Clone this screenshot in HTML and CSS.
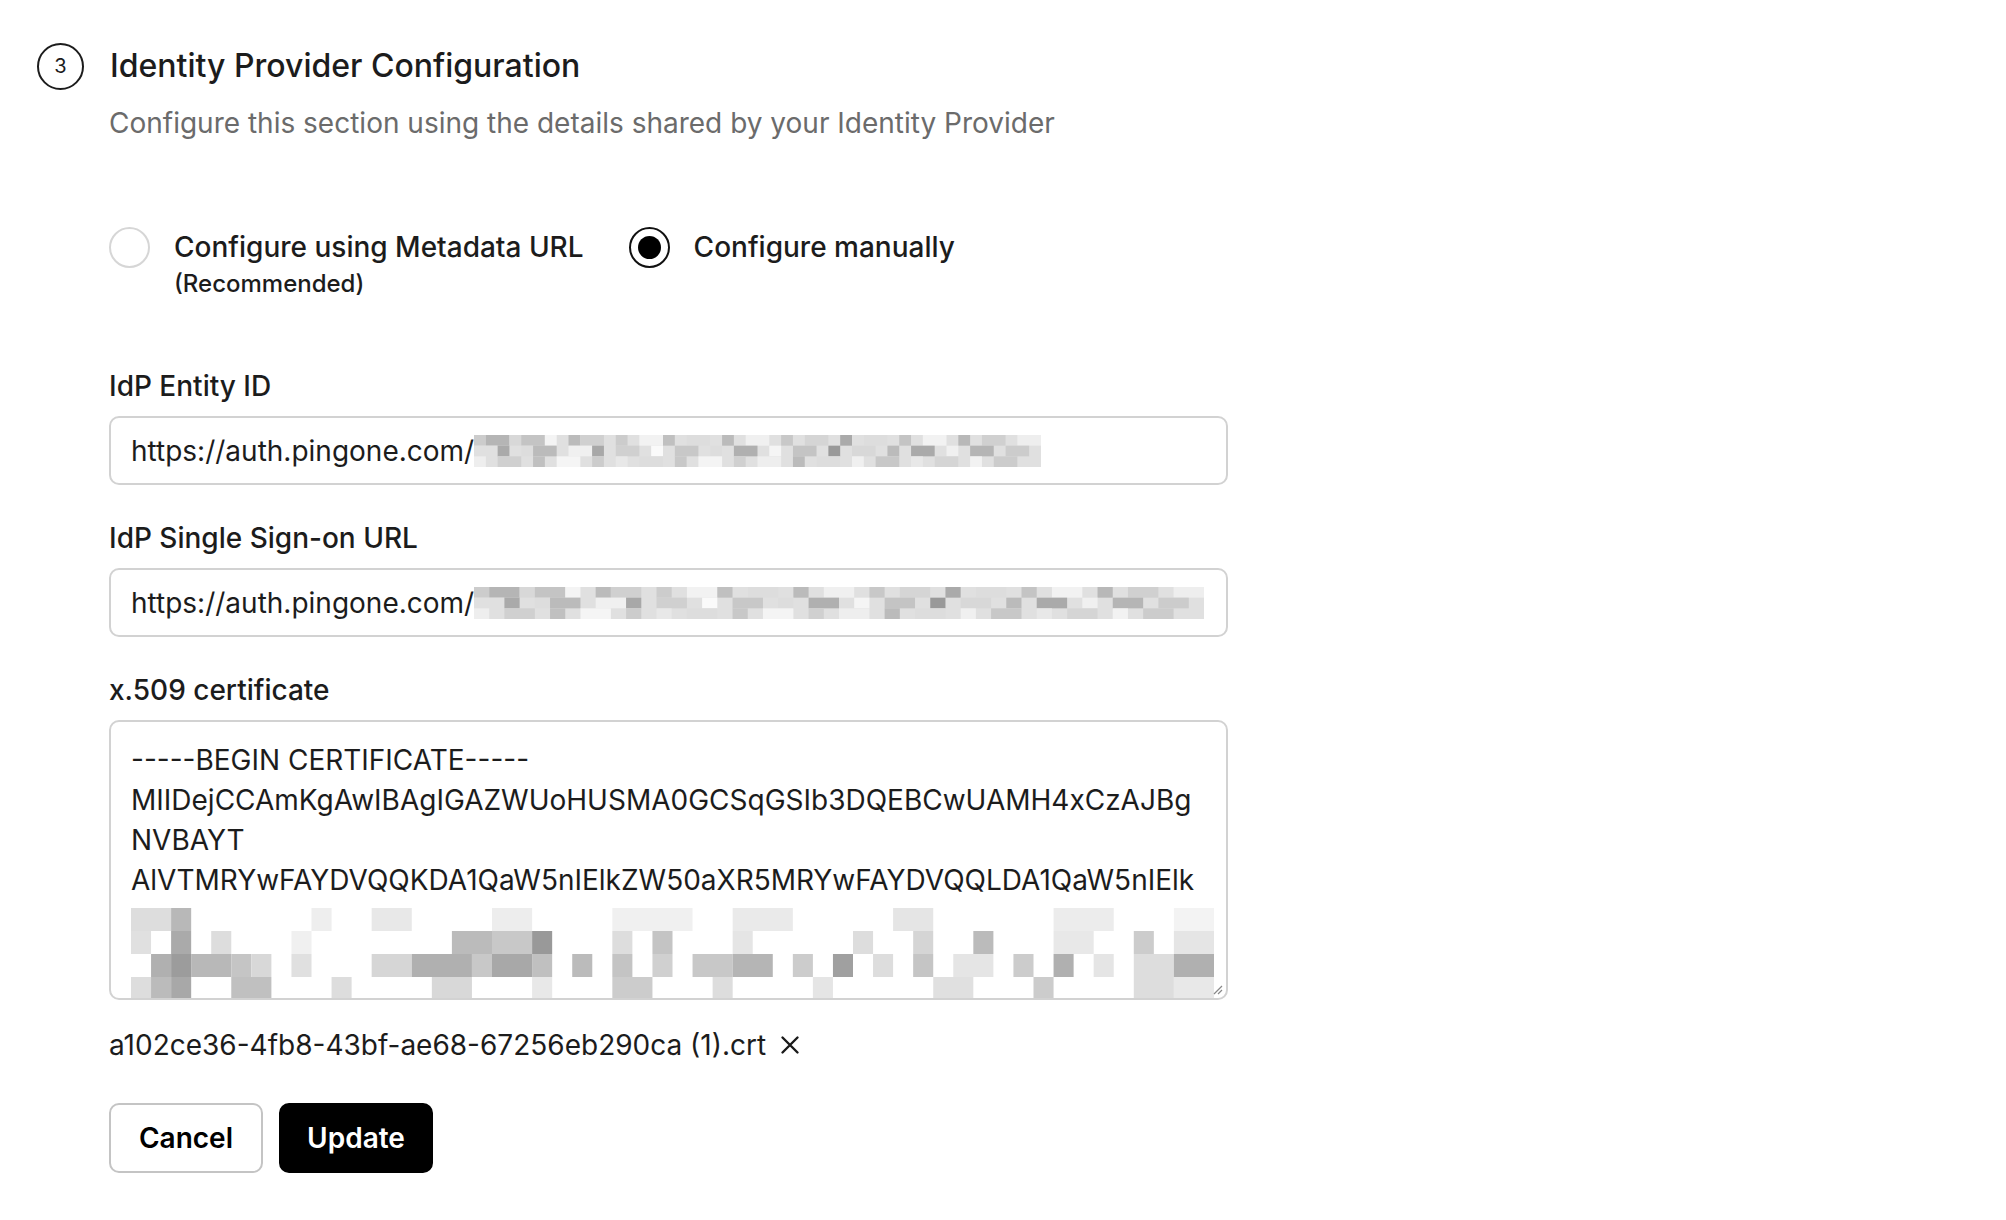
FILE: index.html
```html
<!DOCTYPE html>
<html lang="en">
<head>
<meta charset="utf-8">
<title>Identity Provider Configuration</title>
<link rel="stylesheet" href="styles.css">
</head>
<body>
<svg class="defs" width="0" height="0" aria-hidden="true">
  <symbol id="pix-line" viewBox="0 0 48 3" preserveAspectRatio="none">
    <rect x="0" y="0" width="48" height="3" fill="#e0e0e0"/>
    <g>
      <rect x="0" y="0" width="1" height="1" fill="#ccc"/><rect x="1" y="0" width="2" height="1" fill="#b5b5b5"/><rect x="3" y="0" width="1" height="1" fill="#d8d8d8"/><rect x="4" y="0" width="2" height="1" fill="#c4c4c4"/><rect x="6" y="0" width="1" height="1" fill="#f4f4f4"/><rect x="8" y="0" width="1" height="1" fill="#bbb"/><rect x="9" y="0" width="2" height="1" fill="#d0d0d0"/><rect x="12" y="0" width="1" height="1" fill="#ccc"/><rect x="14" y="0" width="2" height="1" fill="#f2f2f2"/><rect x="16" y="0" width="1" height="1" fill="#c0c0c0"/><rect x="18" y="0" width="2" height="1" fill="#ddd"/><rect x="21" y="0" width="1" height="1" fill="#bbb"/><rect x="23" y="0" width="2" height="1" fill="#f0f0f0"/><rect x="26" y="0" width="1" height="1" fill="#c8c8c8"/><rect x="28" y="0" width="2" height="1" fill="#d5d5d5"/><rect x="31" y="0" width="1" height="1" fill="#aaa"/><rect x="33" y="0" width="2" height="1" fill="#ddd"/><rect x="36" y="0" width="1" height="1" fill="#c4c4c4"/><rect x="38" y="0" width="2" height="1" fill="#f2f2f2"/><rect x="41" y="0" width="1" height="1" fill="#b8b8b8"/><rect x="43" y="0" width="2" height="1" fill="#d0d0d0"/><rect x="46" y="0" width="2" height="1" fill="#eee"/>
      <rect x="0" y="1" width="2" height="1" fill="#e0e0e0"/><rect x="2" y="1" width="1" height="1" fill="#aaa"/><rect x="4" y="1" width="1" height="1" fill="#ddd"/><rect x="5" y="1" width="2" height="1" fill="#bbb"/><rect x="8" y="1" width="2" height="1" fill="#f0f0f0"/><rect x="10" y="1" width="1" height="1" fill="#a8a8a8"/><rect x="12" y="1" width="2" height="1" fill="#d0d0d0"/><rect x="15" y="1" width="1" height="1" fill="#fafafa"/><rect x="17" y="1" width="2" height="1" fill="#c8c8c8"/><rect x="20" y="1" width="1" height="1" fill="#ddd"/><rect x="22" y="1" width="2" height="1" fill="#b0b0b0"/><rect x="25" y="1" width="1" height="1" fill="#f5f5f5"/><rect x="27" y="1" width="2" height="1" fill="#c4c4c4"/><rect x="30" y="1" width="1" height="1" fill="#999"/><rect x="32" y="1" width="2" height="1" fill="#d8d8d8"/><rect x="35" y="1" width="1" height="1" fill="#bbb"/><rect x="37" y="1" width="2" height="1" fill="#aaa"/><rect x="40" y="1" width="1" height="1" fill="#f0f0f0"/><rect x="42" y="1" width="2" height="1" fill="#b5b5b5"/><rect x="45" y="1" width="2" height="1" fill="#ccc"/>
      <rect x="0" y="2" width="1" height="1" fill="#eee"/><rect x="2" y="2" width="2" height="1" fill="#d0d0d0"/><rect x="5" y="2" width="1" height="1" fill="#c0c0c0"/><rect x="7" y="2" width="2" height="1" fill="#f5f5f5"/><rect x="10" y="2" width="1" height="1" fill="#ccc"/><rect x="12" y="2" width="1" height="1" fill="#e8e8e8"/><rect x="14" y="2" width="2" height="1" fill="#ddd"/><rect x="17" y="2" width="1" height="1" fill="#c8c8c8"/><rect x="19" y="2" width="2" height="1" fill="#f4f4f4"/><rect x="22" y="2" width="1" height="1" fill="#d0d0d0"/><rect x="24" y="2" width="2" height="1" fill="#eee"/><rect x="27" y="2" width="1" height="1" fill="#bbb"/><rect x="29" y="2" width="2" height="1" fill="#ddd"/><rect x="32" y="2" width="1" height="1" fill="#f0f0f0"/><rect x="34" y="2" width="2" height="1" fill="#c8c8c8"/><rect x="37" y="2" width="1" height="1" fill="#e8e8e8"/><rect x="39" y="2" width="2" height="1" fill="#d5d5d5"/><rect x="42" y="2" width="1" height="1" fill="#f2f2f2"/><rect x="44" y="2" width="2" height="1" fill="#ccc"/>
    </g>
  </symbol>
  <symbol id="pix-block" viewBox="0 1 54 4" preserveAspectRatio="none">
    <rect x="0" y="0" width="72" height="6" fill="#fff"/>
    <rect x="0" y="1" width="2" height="1" fill="#ddd"/><rect x="2" y="1" width="1" height="1" fill="#b8b8b8"/><rect x="9" y="1" width="1" height="1" fill="#eee"/><rect x="12" y="1" width="2" height="1" fill="#e8e8e8"/><rect x="18" y="1" width="2" height="1" fill="#ededed"/><rect x="24" y="1" width="4" height="1" fill="#f0f0f0"/><rect x="30" y="1" width="3" height="1" fill="#eaeaea"/><rect x="38" y="1" width="2" height="1" fill="#e5e5e5"/><rect x="46" y="1" width="3" height="1" fill="#ececec"/><rect x="52" y="1" width="2" height="1" fill="#f3f3f3"/>
    <rect x="0" y="2" width="1" height="1" fill="#e0e0e0"/><rect x="2" y="2" width="1" height="1" fill="#aaa"/><rect x="4" y="2" width="1" height="1" fill="#ddd"/><rect x="8" y="2" width="1" height="1" fill="#f0f0f0"/><rect x="16" y="2" width="2" height="1" fill="#bbb"/><rect x="18" y="2" width="2" height="1" fill="#c8c8c8"/><rect x="20" y="2" width="1" height="1" fill="#999"/><rect x="24" y="2" width="1" height="1" fill="#ddd"/><rect x="26" y="2" width="1" height="1" fill="#c4c4c4"/><rect x="30" y="2" width="1" height="1" fill="#e5e5e5"/><rect x="36" y="2" width="1" height="1" fill="#ddd"/><rect x="39" y="2" width="1" height="1" fill="#d5d5d5"/><rect x="42" y="2" width="1" height="1" fill="#bbb"/><rect x="46" y="2" width="2" height="1" fill="#e8e8e8"/><rect x="50" y="2" width="1" height="1" fill="#ccc"/><rect x="52" y="2" width="2" height="1" fill="#e5e5e5"/>
    <rect x="1" y="3" width="1" height="1" fill="#b0b0b0"/><rect x="2" y="3" width="1" height="1" fill="#9c9c9c"/><rect x="3" y="3" width="2" height="1" fill="#b8b8b8"/><rect x="5" y="3" width="1" height="1" fill="#c5c5c5"/><rect x="6" y="3" width="1" height="1" fill="#d8d8d8"/><rect x="8" y="3" width="1" height="1" fill="#e0e0e0"/><rect x="12" y="3" width="2" height="1" fill="#d6d6d6"/><rect x="14" y="3" width="3" height="1" fill="#b0b0b0"/><rect x="17" y="3" width="1" height="1" fill="#c8c8c8"/><rect x="18" y="3" width="2" height="1" fill="#a8a8a8"/><rect x="20" y="3" width="1" height="1" fill="#c0c0c0"/><rect x="22" y="3" width="1" height="1" fill="#bbb"/><rect x="24" y="3" width="1" height="1" fill="#c4c4c4"/><rect x="26" y="3" width="1" height="1" fill="#d0d0d0"/><rect x="28" y="3" width="2" height="1" fill="#c8c8c8"/><rect x="30" y="3" width="2" height="1" fill="#b5b5b5"/><rect x="33" y="3" width="1" height="1" fill="#ccc"/><rect x="35" y="3" width="1" height="1" fill="#a0a0a0"/><rect x="37" y="3" width="1" height="1" fill="#ddd"/><rect x="39" y="3" width="1" height="1" fill="#c5c5c5"/><rect x="41" y="3" width="2" height="1" fill="#e5e5e5"/><rect x="44" y="3" width="1" height="1" fill="#ccc"/><rect x="46" y="3" width="1" height="1" fill="#b0b0b0"/><rect x="48" y="3" width="1" height="1" fill="#e5e5e5"/><rect x="50" y="3" width="2" height="1" fill="#ddd"/><rect x="52" y="3" width="2" height="1" fill="#b0b0b0"/>
    <rect x="0" y="4" width="1" height="1" fill="#ddd"/><rect x="1" y="4" width="1" height="1" fill="#bbb"/><rect x="2" y="4" width="1" height="1" fill="#a8a8a8"/><rect x="5" y="4" width="2" height="1" fill="#c0c0c0"/><rect x="10" y="4" width="1" height="1" fill="#ddd"/><rect x="15" y="4" width="2" height="1" fill="#d8d8d8"/><rect x="20" y="4" width="1" height="1" fill="#e8e8e8"/><rect x="24" y="4" width="2" height="1" fill="#ccc"/><rect x="29" y="4" width="1" height="1" fill="#ddd"/><rect x="34" y="4" width="1" height="1" fill="#e5e5e5"/><rect x="40" y="4" width="2" height="1" fill="#e0e0e0"/><rect x="45" y="4" width="1" height="1" fill="#ccc"/><rect x="50" y="4" width="2" height="1" fill="#ddd"/><rect x="52" y="4" width="2" height="1" fill="#e8e8e8"/>
  </symbol>
</svg>

<section class="step">
  <header class="step-head">
    <span class="step-num">3</span>
    <h2 class="step-title">Identity Provider Configuration</h2>
  </header>
  <div class="step-body">
    <p class="step-sub">Configure this section using the details shared by your Identity Provider</p>

    <div class="radios">
      <label class="radio">
        <span class="radio-dot"></span>
        <span class="radio-text">Configure using Metadata URL<small>(Recommended)</small></span>
      </label>
      <label class="radio radio-on">
        <span class="radio-dot"></span>
        <span class="radio-text">Configure manually</span>
      </label>
    </div>

    <div class="field field-first">
      <div class="label">IdP Entity ID</div>
      <div class="input"><span class="val">https://auth.pingone.com/</span><svg class="blur blur-a"><use href="#pix-line" width="100%" height="100%"/></svg></div>
    </div>

    <div class="field">
      <div class="label">IdP Single Sign-on URL</div>
      <div class="input"><span class="val">https://auth.pingone.com/</span><svg class="blur blur-b"><use href="#pix-line" width="100%" height="100%"/></svg></div>
    </div>

    <div class="field">
      <div class="label">x.509 certificate</div>
      <div class="textarea">
        <div class="line">-----BEGIN CERTIFICATE-----</div>
        <div class="line">MIIDejCCAmKgAwIBAgIGAZWUoHUSMA0GCSqGSIb3DQEBCwUAMH4xCzAJBg</div>
        <div class="line">NVBAYT</div>
        <div class="line">AlVTMRYwFAYDVQQKDA1QaW5nIElkZW50aXR5MRYwFAYDVQQLDA1QaW5nIElk</div>
        <div class="line">ZW50</div>
        <svg class="blur blur-c"><use href="#pix-block" width="100%" height="100%"/></svg>
        <svg class="grip" width="12" height="12" viewBox="0 0 12 12"><path d="M11 3L3 11M11 7L7 11" stroke="#888" stroke-width="1.2"/></svg>
      </div>
    </div>

    <div class="file">
      <span>a102ce36-4fb8-43bf-ae68-67256eb290ca (1).crt</span>
      <svg class="x" width="20" height="20" viewBox="0 0 20 20"><path d="M2.5 2.5L17.5 17.5M17.5 2.5L2.5 17.5" stroke="#1a1a1a" stroke-width="2.4" stroke-linecap="round"/></svg>
    </div>

    <div class="actions">
      <button class="btn btn-ghost">Cancel</button>
      <button class="btn btn-dark">Update</button>
    </div>
  </div>
</section>
</body>
</html>
```
FILE: styles.css
```css
* { box-sizing: border-box; }
html, body { margin: 0; background: #fff; }
body {
  font-family: Inter, "Noto Sans", "Liberation Sans", sans-serif;
  color: #1c1c1c;
}
.defs { position: absolute; width: 0; height: 0; overflow: hidden; }

.step { padding: 42px 0 0 37px; }
.step-head { display: flex; align-items: center; gap: 26px; height: 48px; }
.step-num {
  width: 47px; height: 47px; border: 2px solid #1c1c1c; border-radius: 50%;
  display: flex; align-items: center; justify-content: center;
  font-size: 20px; font-weight: 400; flex: none;
}
.step-title { margin: 0; font-size: 32px; font-weight: 500; line-height: 38px; }
.step-body { padding-left: 72px; width: 1190px; }
.step-sub { margin: 16px 0 0; font-size: 28px; color: #6b6b6b; line-height: 34px; }

.radios { display: flex; gap: 45px; margin-top: 87px; }
.radio { display: flex; align-items: flex-start; gap: 24px; cursor: pointer; }
.radio-dot {
  width: 41px; height: 41px; border-radius: 50%; border: 2px solid #d6d6d6; flex: none;
  display: flex; align-items: center; justify-content: center;
}
.radio-on .radio-dot { border-color: #111; border-width: 2.5px; }
.radio-on .radio-dot::after { content: ""; width: 23px; height: 23px; border-radius: 50%; background: #000; }
.radio-text { font-size: 28px; font-weight: 500; line-height: 40px; display: flex; flex-direction: column; }
.radio-text small { font-size: 24px; line-height: 34px; font-weight: 500; }

.field { margin-top: 36px; }
.field-first { margin-top: 68px; }
.label { font-size: 28px; font-weight: 500; line-height: 34px; margin-bottom: 13px; }
.input {
  width: 1119px; height: 69px; border: 2px solid #d2d2d2; border-radius: 10px;
  display: flex; align-items: center; padding: 0 20px; font-size: 28px; overflow: hidden; white-space: nowrap;
}
.val { color: #1c1c1c; flex: none; }
.blur { display: block; flex: none; }
.blur-a { width: 567px; height: 32px; }
.blur-b { width: 730px; height: 32px; }

.textarea {
  position: relative; width: 1119px; height: 280px; border: 2px solid #d2d2d2; border-radius: 10px;
  padding: 18px 20px; font-size: 28px; line-height: 40px; overflow: hidden;
}
.line { white-space: nowrap; }
.blur-c { position: absolute; left: 20px; top: 186px; width: 1083px; height: 92px; }
.grip { position: absolute; right: 3px; bottom: 3px; }

.file { display: flex; align-items: center; gap: 14px; margin-top: 28px; font-size: 28px; line-height: 34px; }
.actions { display: flex; gap: 16px; margin-top: 41px; }
.btn {
  font-family: inherit; height: 70px; width: 154px; border-radius: 10px; font-size: 28px; font-weight: 600;
  cursor: pointer;
}
.btn-ghost { background: #fff; border: 2px solid #c4c4c4; color: #000; }
.btn-dark { background: #000; border: 2px solid #000; color: #fff; }
```
